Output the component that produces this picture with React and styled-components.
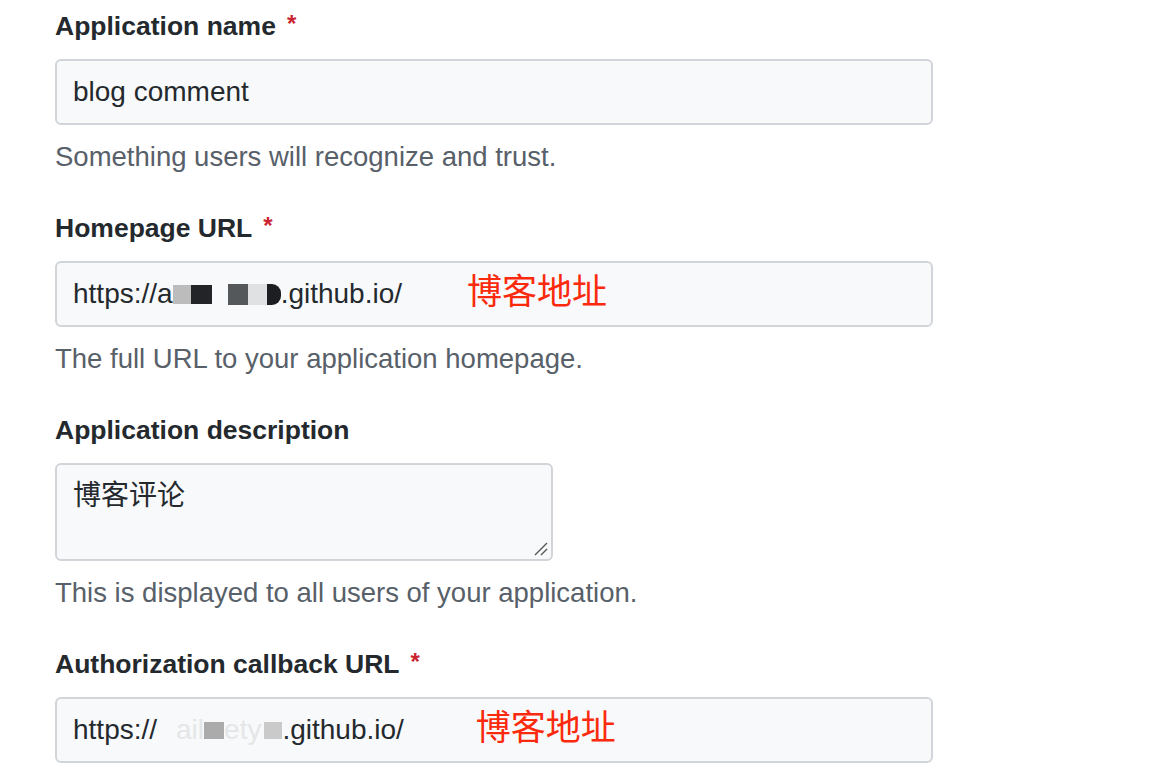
import React from 'react';
import styled, { createGlobalStyle } from 'styled-components';

const GlobalStyle = createGlobalStyle`
    body {
        margin: 0;
        background: #fff;
        font-family: "Liberation Sans", "Noto Sans CJK SC", sans-serif;
    }
`;

const Form = styled.div`
    padding: 10px 0 0 55px;
`;

const Group = styled.div`
    margin-bottom: 37px;
`;

const Label = styled.div`
    font-size: 26.5px;
    line-height: 33px;
    font-weight: 700;
    color: #24292e;
    margin-bottom: 16px;
`;

const Star = styled.span`
    color: #cb2431;
    margin-left: 11px;
    font-size: 24px;
    position: relative;
    top: -3px;
`;

const Input = styled.div`
    box-sizing: border-box;
    width: 878px;
    height: 66px;
    display: flex;
    align-items: center;
    padding-left: 16px;
    background: #f8f9fa;
    border: 2px solid #d1d5da;
    border-radius: 6px;
    font-size: 28px;
    color: #24292e;
    white-space: nowrap;
`;

const TextArea = styled.div`
    position: relative;
    box-sizing: border-box;
    width: 498px;
    height: 98px;
    padding: 14px 16px;
    background: #f8f9fa;
    border: 2px solid #d1d5da;
    border-radius: 6px;
    font-size: 28px;
    line-height: 34px;
    color: #24292e;
`;

const Grip = styled.svg`
    position: absolute;
    right: 3px;
    bottom: 3px;
`;

const Note = styled.div`
    margin-top: 14px;
    font-size: 27.5px;
    line-height: 36px;
    color: #586069;
`;

const Blot = styled.span`
    display: inline-block;
    width: ${p => p.w}px;
    height: ${p => p.h || 19}px;
    background: ${p => p.c};
    border-radius: ${p => p.r || 0};
    vertical-align: ${p => p.v || 0}px;
`;

const Gap = styled.span`
    display: inline-block;
    width: ${p => p.w}px;
`;

const Faint = styled.span`
    color: #e4e6e8;
`;

const Mark = styled.span`
    color: #fb2a0c;
    font-size: 35px;
    line-height: 1;
    margin-bottom: 6px;
    margin-left: ${p => p.ml}px;
`;

export default function App() {
    return (
        <Form>
            <GlobalStyle />
            <Group>
                <Label>
                    Application name<Star>*</Star>
                </Label>
                <Input>blog comment</Input>
                <Note>Something users will recognize and trust.</Note>
            </Group>

            <Group>
                <Label>
                    Homepage URL<Star>*</Star>
                </Label>
                <Input>
                    https://a
                    <Blot w={18} c="#bcbcbc" />
                    <Blot w={21} c="#222427" />
                    <Gap w={16} />
                    <Blot w={20} c="#55585b" h={21} v={-2} />
                    <Blot w={19} c="#e0e1e2" h={21} v={-2} />
                    <Blot w={14} c="#1c1e21" h={21} v={-2} r="0 9px 9px 0" />
                    .github.io/
                    <Mark ml={65}>博客地址</Mark>
                </Input>
                <Note>The full URL to your application homepage.</Note>
            </Group>

            <Group>
                <Label>Application description</Label>
                <TextArea>
                    博客评论
                    <Grip width="14" height="14" viewBox="0 0 14 14">
                        <path d="M1 13 L13 1 M7 13 L13 7" stroke="#555" strokeWidth="1.4" fill="none" />
                    </Grip>
                </TextArea>
                <Note>This is displayed to all users of your application.</Note>
            </Group>

            <Group>
                <Label>
                    Authorization callback URL<Star>*</Star>
                </Label>
                <Input>
                    https://
                    <Gap w={19} />
                    <Faint>ail</Faint>
                    <Blot w={20} c="#ababab" h={17} v={2} />
                    <Faint>ety</Faint>
                    <Gap w={3} />
                    <Blot w={18} c="#cacaca" h={17} v={2} />
                    .github.io/
                    <Mark ml={72}>博客地址</Mark>
                </Input>
            </Group>
        </Form>
    );
}
